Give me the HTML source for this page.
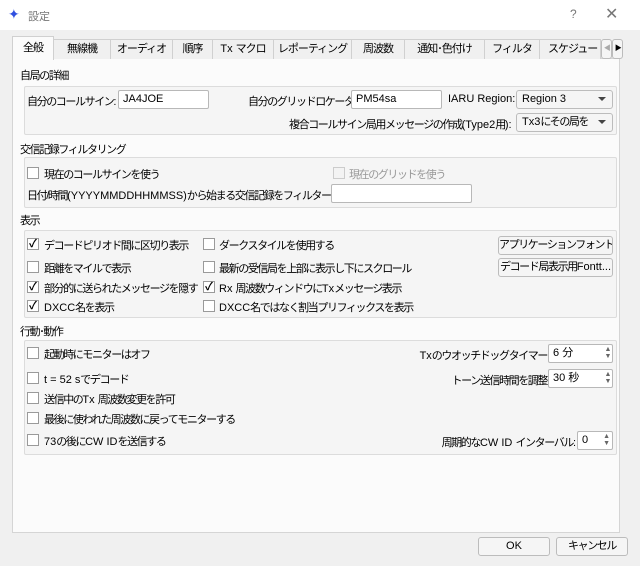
<!DOCTYPE html>
<html><head><meta charset="utf-8"><style>
*{box-sizing:border-box}
body{margin:0;width:640px;height:566px;background:#f0f0f0;font-family:"Liberation Sans","Noto Sans CJK JP",sans-serif;font-size:11px;letter-spacing:-1.4px;color:#000;position:relative;overflow:hidden}
.l{letter-spacing:0}
.a{position:absolute;white-space:nowrap}
.title{left:0;top:0;width:640px;height:30px;background:#fff}
.tab{position:absolute;top:39px;height:20px;border:1px solid #d0d0d0;border-bottom:none;background:#f0f0f0;text-align:center;line-height:18px;white-space:nowrap;letter-spacing:-1px}
.panel{left:12px;top:58px;width:608px;height:475px;background:#fbfbfb;border:1px solid #d5d5d5}
.grp{position:absolute;left:24px;width:593px;border:1px solid #dcdcdc;background:#f5f5f5;border-radius:2px}
.in{position:absolute;height:19px;background:#fff;border:1px solid #b8b8b8;padding-left:4px;line-height:17px;border-radius:2px;white-space:nowrap}
.cb{position:absolute;width:12px;height:12px;border:1px solid #9a9a9a;background:#fff;font-size:11px;line-height:10px;text-align:center;font-weight:bold;letter-spacing:0}
.btn{position:absolute;height:19px;background:#f5f5f5;border:1px solid #bcbcbc;border-radius:3px;text-align:center;line-height:17px;white-space:nowrap;overflow:hidden}
.arr{position:absolute;right:6px;top:6px;width:0;height:0;border-left:4px solid transparent;border-right:4px solid transparent;border-top:4px solid #444}
.sp{position:absolute;right:2px;top:1px;font-size:7px;line-height:7px;color:#666}
</style></head><body>
<div class="a title"></div>
<div class="a" style="left:8px;top:6px;color:#3050e0;font-size:14px">✦</div>
<div class="a" style="left:28px;top:8px;color:#777;font-size:11px;letter-spacing:0">設定</div>
<div class="a" style="left:570px;top:7px;color:#777;font-size:12px">?</div>
<div class="a" style="left:605px;top:4px;color:#777;font-size:16px">✕</div>

<div class="a panel"></div>
<div class="tab" style="left:53px;width:58px">無線機</div>
<div class="tab" style="left:110px;width:63px">オーディオ</div>
<div class="tab" style="left:172px;width:41px">順序</div>
<div class="tab" style="left:212px;width:62px"><span class="l">Tx </span>マクロ</div>
<div class="tab" style="left:273px;width:79px">レポーティング</div>
<div class="tab" style="left:351px;width:54px">周波数</div>
<div class="tab" style="left:404px;width:81px">通知･色付け</div>
<div class="tab" style="left:484px;width:56px">フィルタ</div>
<div class="tab" style="left:539px;width:62px;text-align:left;padding-left:8px;overflow:hidden">スケジュー</div>
<div class="tab" style="left:12px;top:36px;width:42px;height:24px;background:#fbfbfb;line-height:22px;z-index:2">全般</div>
<div class="btn" style="left:601px;top:39px;width:11px;height:20px;font-size:7px;line-height:18px;color:#aaa">◀</div>
<div class="btn" style="left:612px;top:39px;width:11px;height:20px;font-size:7px;line-height:18px">▶</div>

<div class="a" style="left:20px;top:67px">自局の詳細</div>
<div class="grp" style="top:86px;height:49px"></div>
<div class="a" style="left:27px;top:93px">自分のコールサイン:</div>
<div class="in l" style="left:118px;top:90px;width:91px">JA4JOE</div>
<div class="a" style="left:248px;top:93px">自分のグリッドロケータ:</div>
<div class="in l" style="left:351px;top:90px;width:91px">PM54sa</div>
<div class="a l" style="left:448px;top:93px">IARU Region:</div>
<div class="btn l" style="left:516px;top:90px;width:97px;text-align:left;padding-left:5px">Region 3<div class="arr"></div></div>
<div class="a" style="left:289px;top:116px">複合コールサイン局用メッセージの作成<span class="l">(Type2</span>用<span class="l">):</span></div>
<div class="btn" style="left:516px;top:113px;width:97px;text-align:left;padding-left:5px"><span class="l">Tx3</span>にその局を<div class="arr"></div></div>

<div class="a" style="left:20px;top:141px">交信記録フィルタリング</div>
<div class="grp" style="top:157px;height:51px"></div>
<div class="cb" style="left:27px;top:167px"></div><div class="a" style="left:44px;top:166px">現在のコールサインを使う</div>
<div class="cb" style="left:333px;top:167px;border-color:#ccc;background:#f3f3f3"></div><div class="a" style="left:349px;top:166px;color:#999">現在のグリッドを使う</div>
<div class="a" style="left:27px;top:187px">日付/時間<span class="l">(YYYYMMDDHHMMSS)</span>から始まる交信記録をフィルター</div>
<div class="in" style="left:331px;top:184px;width:141px"></div>

<div class="a" style="left:20px;top:212px">表示</div>
<div class="grp" style="top:230px;height:88px"></div>
<div class="cb" style="left:27px;top:238px">✓</div><div class="a" style="left:44px;top:237px">デコードピリオド間に区切り表示</div>
<div class="cb" style="left:203px;top:238px"></div><div class="a" style="left:219px;top:237px">ダークスタイルを使用する</div>
<div class="btn" style="left:498px;top:236px;width:115px">アプリケーションフォント…</div>
<div class="cb" style="left:27px;top:261px"></div><div class="a" style="left:44px;top:260px">距離をマイルで表示</div>
<div class="cb" style="left:203px;top:261px"></div><div class="a" style="left:219px;top:260px">最新の受信局を上部に表示し下にスクロール</div>
<div class="btn" style="left:498px;top:258px;width:115px">デコード局表示用<span class="l">Fontt...</span></div>
<div class="cb" style="left:27px;top:281px">✓</div><div class="a" style="left:44px;top:280px">部分的に送られたメッセージを隠す</div>
<div class="cb" style="left:203px;top:281px">✓</div><div class="a" style="left:219px;top:280px"><span class="l">Rx </span>周波数ウィンドウに<span class="l">Tx</span>メッセージ表示</div>
<div class="cb" style="left:27px;top:300px">✓</div><div class="a" style="left:44px;top:299px"><span class="l">DXCC</span>名を表示</div>
<div class="cb" style="left:203px;top:300px"></div><div class="a" style="left:219px;top:299px"><span class="l">DXCC</span>名ではなく割当プリフィックスを表示</div>

<div class="a" style="left:20px;top:323px">行動･動作</div>
<div class="grp" style="top:340px;height:115px"></div>
<div class="cb" style="left:27px;top:347px"></div><div class="a" style="left:44px;top:346px">起動時にモニターはオフ</div>
<div class="a" style="right:93px;top:347px"><span class="l">Tx</span>のウオッチドッグタイマー</div>
<div class="in" style="left:548px;top:344px;width:65px"><span class="l">6 </span>分<div class="sp">▲<br>▼</div></div>
<div class="cb" style="left:27px;top:372px"></div><div class="a" style="left:44px;top:371px"><span class="l">t = 52 s</span>でデコード</div>
<div class="a" style="right:93px;top:372px">トーン送信時間を調整</div>
<div class="in" style="left:548px;top:369px;width:65px"><span class="l">30 </span>秒<div class="sp">▲<br>▼</div></div>
<div class="cb" style="left:27px;top:392px"></div><div class="a" style="left:44px;top:391px">送信中の<span class="l">Tx </span>周波数変更を許可</div>
<div class="cb" style="left:27px;top:412px"></div><div class="a" style="left:44px;top:411px">最後に使われた周波数に戻ってモニターする</div>
<div class="cb" style="left:27px;top:434px"></div><div class="a" style="left:44px;top:433px"><span class="l">73</span>の後に<span class="l">CW ID</span>を送信する</div>
<div class="a" style="right:64px;top:434px">周期的な<span class="l">CW ID </span>インターバル<span class="l">:</span></div>
<div class="in l" style="left:577px;top:431px;width:36px">0<div class="sp">▲<br>▼</div></div>

<div class="btn l" style="left:478px;top:537px;width:72px">OK</div>
<div class="btn" style="left:556px;top:537px;width:72px">キャンセル</div>
</body></html>
